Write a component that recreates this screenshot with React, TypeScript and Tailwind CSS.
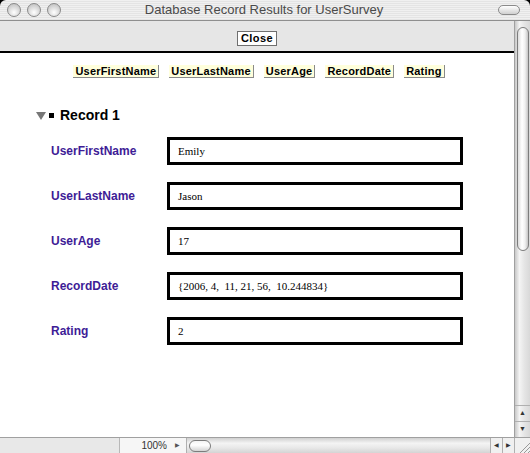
import React from 'react'

const fields = [
  { name: 'UserFirstName', value: 'Emily' },
  { name: 'UserLastName', value: 'Jason' },
  { name: 'UserAge', value: '17' },
  { name: 'RecordDate', value: '{2006, 4,  11, 21, 56,  10.244834}' },
  { name: 'Rating', value: '2' },
]

function Light() {
  return (
    <div className="w-[14px] h-[14px] rounded-full border border-[#8a8a8a] bg-[radial-gradient(circle_at_50%_70%,#ffffff,#d4d4d4_60%,#b8b8b8)]" />
  )
}

export default function App() {
  return (
    <div className="w-[530px] h-[453px] bg-black flex flex-col overflow-hidden font-['Liberation_Sans',sans-serif]">
      {/* title bar */}
      <div className="h-[21px] rounded-t-[6px] bg-[repeating-linear-gradient(180deg,#f0f0f0_0px,#f0f0f0_1px,#e4e4e4_1px,#e4e4e4_2px)] border-b border-[#8f8f8f] flex items-center relative">
        <div className="flex items-center gap-[6px] pl-[7px]">
          <Light />
          <Light />
          <Light />
        </div>
        <div className="absolute inset-0 flex items-center justify-center text-[13px] text-[#4a4a4a] pr-[2px]">
          Database Record Results for UserSurvey
        </div>
        <div className="ml-auto mr-[10px] w-[22px] h-[10px] rounded-full border border-[#8a8a8a] bg-[linear-gradient(180deg,#ffffff,#d0d0d0)]" />
      </div>

      {/* middle */}
      <div className="flex flex-1 min-h-0 bg-white">
        <div className="flex-1 flex flex-col min-w-0">
          <div className="h-[32px] bg-[#e6e6e6] border-b-2 border-black flex items-center justify-center">
            <button className="mt-[4px] h-[15px] px-[3px] bg-white border border-[#6f6f6f] text-[11px] font-bold leading-none text-black tracking-[0.4px]">
              Close
            </button>
          </div>

          <div className="flex-1 bg-white">
            <div className="flex justify-center gap-[10px] pt-[12px] pl-[4px]">
              {fields.map(f => (
                <div
                  key={f.name}
                  className="h-[13px] px-[2px] bg-[#ffffdc] border-r border-b border-[#8a8a8a] text-[11px] font-bold leading-[12px] text-black tracking-[0.2px]"
                >
                  {f.name}
                </div>
              ))}
            </div>

            <div className="flex items-center pl-[36px] mt-[30px] h-[14px]">
              <svg width="10" height="9" viewBox="0 0 10 9">
                <polygon points="0,1 10,1 5,9" fill="#777" />
              </svg>
              <div className="w-[5px] h-[5px] bg-black ml-[3px]" />
              <span className="ml-[6px] text-[14px] font-bold text-black leading-none">Record 1</span>
            </div>

            <div className="flex flex-col gap-[17px] mt-[15px]">
              {fields.map(f => (
                <div key={f.name} className="flex items-center h-[28px]">
                  <div className="w-[167px] pl-[51px] shrink-0 text-[12px] font-bold text-[#3e1c96] whitespace-nowrap">
                    {f.name}
                  </div>
                  <div className="w-[296px] h-[28px] border-[3px] border-black flex items-center pl-[8px] font-['Liberation_Serif',serif] text-[11px] text-black whitespace-pre">
                    {f.value}
                  </div>
                </div>
              ))}
            </div>
          </div>
        </div>

        {/* vertical scrollbar */}
        <div className="w-[16px] flex flex-col bg-[linear-gradient(90deg,#c8c8c8,#f4f4f4_30%,#e6e6e6_60%,#d8d8d8)] border-l border-[#a0a0a0]">
          <div className="mx-auto mt-[6px] w-[12px] h-[224px] rounded-full border border-[#7c7c7c] bg-[linear-gradient(90deg,#dcdcdc,#ffffff_40%,#f0f0f0_70%,#c4c4c4)]" />
          <div className="flex-1" />
          <div className="h-[16px] flex items-center justify-center border-t border-[#b0b0b0] text-[7px] text-[#333]">▲</div>
          <div className="h-[16px] flex items-center justify-center border-t border-[#b0b0b0] text-[7px] text-[#333]">▼</div>
        </div>
      </div>

      {/* bottom bar */}
      <div className="h-[16px] flex bg-white border-t border-[#a0a0a0]">
        <div className="w-[120px] bg-[#e8e8e8] border-r border-[#b8b8b8]" />
        <div className="w-[66px] bg-[#f6f6f6] flex items-center justify-end pr-[6px] gap-[8px] text-[10px] text-[#333]">
          <span>100%</span>
          <span className="text-[6px] text-[#555]">▶</span>
        </div>
        <div className="flex-1 flex items-center bg-[linear-gradient(180deg,#d0d0d0,#f4f4f4_35%,#e8e8e8_65%,#d4d4d4)] border-l border-[#b0b0b0]">
          <div className="ml-[2px] w-[22px] h-[12px] rounded-full border border-[#7c7c7c] bg-[linear-gradient(180deg,#f4f4f4,#ffffff_40%,#d4d4d4)]" />
        </div>
        <div className="w-[12px] flex items-center justify-center border-l border-[#b0b0b0] text-[6px] text-[#333] bg-[#f0f0f0]">◀</div>
        <div className="w-[12px] flex items-center justify-center border-l border-[#b0b0b0] text-[6px] text-[#333] bg-[#f0f0f0]">▶</div>
        <div className="w-[16px] bg-[#f0f0f0] border-l border-[#b0b0b0] flex items-end justify-end">
          <svg width="12" height="12" viewBox="0 0 12 12">
            <line x1="2" y1="12" x2="12" y2="2" stroke="#999" />
            <line x1="6" y1="12" x2="12" y2="6" stroke="#999" />
            <line x1="10" y1="12" x2="12" y2="10" stroke="#999" />
          </svg>
        </div>
      </div>
    </div>
  )
}
